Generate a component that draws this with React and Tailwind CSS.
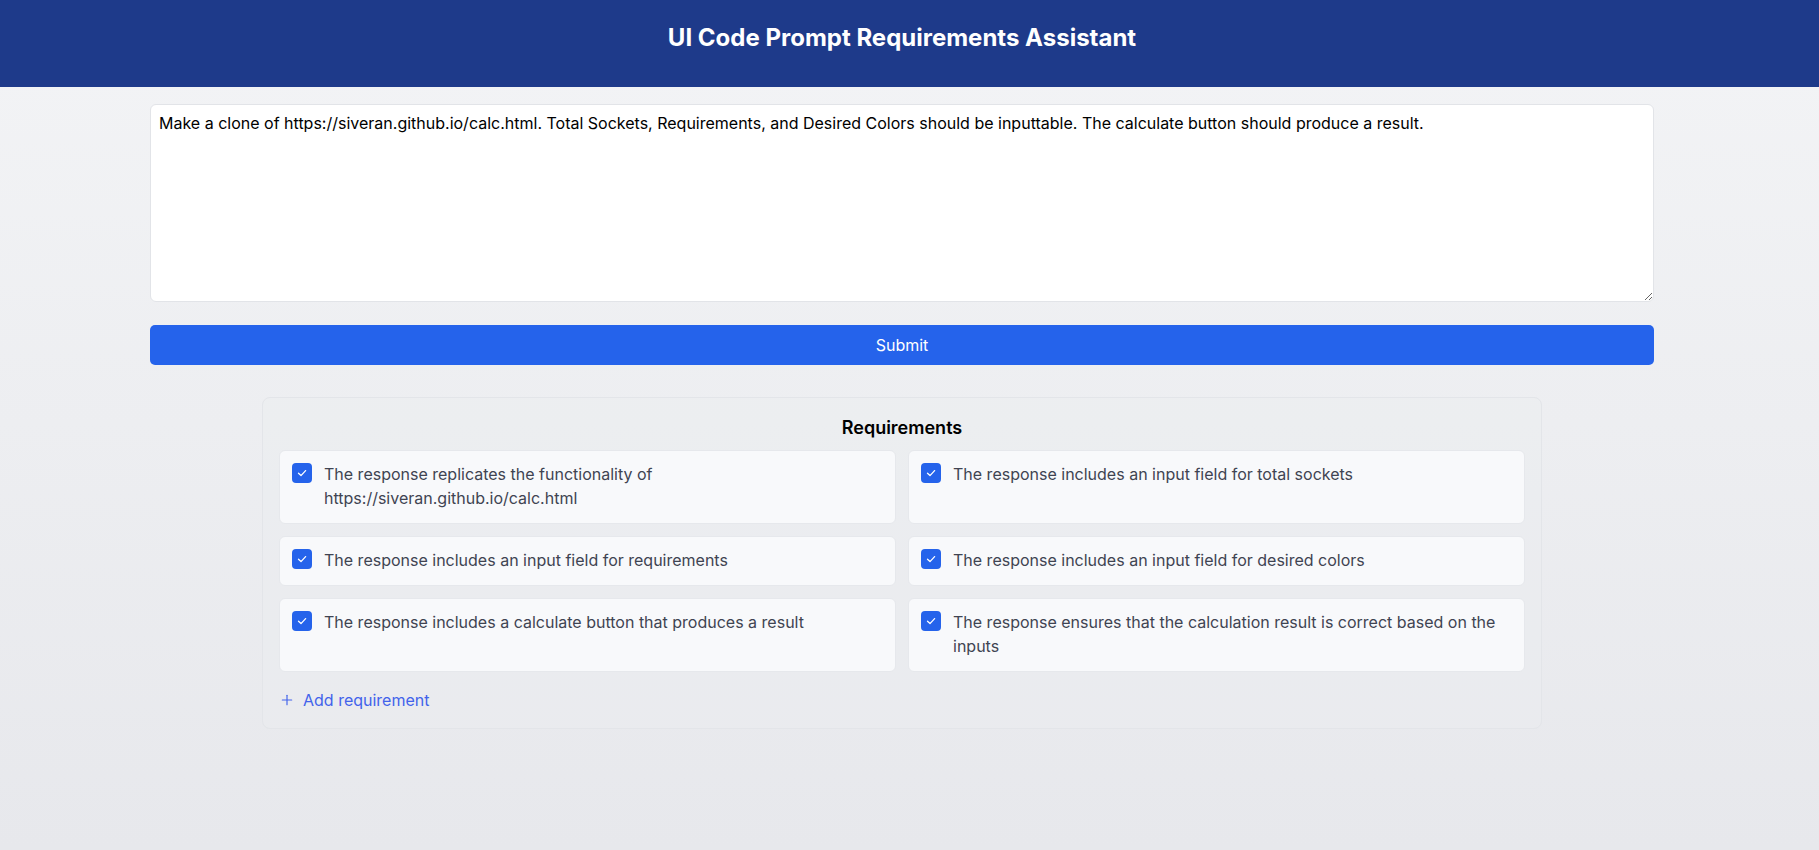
import React from "react";
import { Plus } from "lucide-react";

const reqs = [
  "The response replicates the functionality of https://siveran.github.io/calc.html",
  "The response includes an input field for total sockets",
  "The response includes an input field for requirements",
  "The response includes an input field for desired colors",
  "The response includes a calculate button that produces a result",
  "The response ensures that the calculation result is correct based on the inputs",
];

function Check() {
  return (
    <div className="w-5 h-5 shrink-0 rounded-[4px] bg-[#2563eb] flex items-center justify-center">
      <svg width="12" height="12" viewBox="0 0 12 12" fill="none">
        <polyline points="2.5,6.3 5,8.6 9.6,3.6" stroke="white" strokeWidth="1.3" strokeLinecap="round" strokeLinejoin="round" />
      </svg>
    </div>
  );
}

export default function App() {
  return (
    <div
      className="min-h-screen bg-gradient-to-b from-[#f3f4f6] to-[#e7e8ec]"
      style={{ fontFamily: "Inter, 'Noto Sans', sans-serif" }}
    >
      <header className="h-[87px] bg-[#1e3a8a] pt-[22px]">
        <div className="w-[1804px]">
          <h1 className="text-center text-2xl leading-8 font-bold text-white">
            UI Code Prompt Requirements Assistant
          </h1>
        </div>
      </header>
      <div className="w-[1804px]">
        <div className="pt-[17px] flex flex-col items-center">
          <textarea
            className="block w-[1504px] h-[198px] rounded-md border border-[#e2e4e8] bg-white p-2 text-base leading-[1.3] text-black outline-none"
            defaultValue="Make a clone of https://siveran.github.io/calc.html. Total Sockets, Requirements, and Desired Colors should be inputtable. The calculate button should produce a result."
          />
          <button className="mt-[23px] w-[1504px] h-[40px] rounded-[5px] bg-[#2563eb] text-white text-base">
            Submit
          </button>
          <div className="mt-[32px] w-[1280px] rounded-lg border border-[#e3e5e9] bg-[#eceef1]/40 p-4">
            <h2 className="text-center text-lg leading-7 font-semibold text-black mb-2">Requirements</h2>
            <div className="grid grid-cols-2 gap-3">
              {reqs.map((r, i) => (
                <div
                  key={i}
                  className="flex items-start gap-3 rounded-md border border-[#e6e8ec] bg-[#f8f9fb] px-3 pt-3 pb-[13px]"
                >
                  <Check />
                  <span className="text-base leading-6 text-[#3f4452] -mt-px">{r}</span>
                </div>
              ))}
            </div>
            <button className="mt-4 flex items-center gap-2 text-base leading-6 text-[#4263eb]">
              <Plus size={16} strokeWidth={1.75} />
              Add requirement
            </button>
          </div>
        </div>
      </div>
    </div>
  );
}
